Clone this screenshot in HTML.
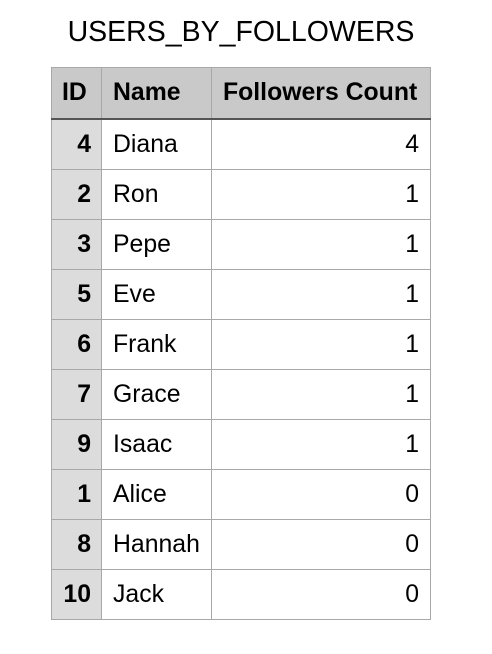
<!DOCTYPE html>
<html><head><style>
body{margin:0;width:492px;height:654px;background:#fff;font-family:"Liberation Sans",Arial,sans-serif;}
.t{position:absolute;top:16px;left:0;width:482px;text-align:center;font-size:28.5px;color:#000;}
table{position:absolute;left:51px;top:67px;border-collapse:collapse;font-size:24.8px;table-layout:fixed;width:379px;}
td,th{border:1px solid #a8a8a8;height:49px;padding:0 11px;white-space:nowrap;overflow:visible;}
th{background:#c9c9c9;font-weight:bold;text-align:left;height:50px;border-bottom:2px solid #555;}
td.id{background:#dcdcdc;font-weight:bold;text-align:right;padding:0 10px 0 0;}
th.id{padding:0 0 0 10px;}
.c{text-align:right;}
th.c{text-align:left;}
</style></head><body>
<div class="t">USERS_BY_FOLLOWERS</div>
<table>
<colgroup><col style="width:50px"><col style="width:110px"><col style="width:219px"></colgroup>
<tr><th class="id">ID</th><th>Name</th><th class="c">Followers Count</th></tr>
<tr><td class="id">4</td><td>Diana</td><td class="c">4</td></tr>
<tr><td class="id">2</td><td>Ron</td><td class="c">1</td></tr>
<tr><td class="id">3</td><td>Pepe</td><td class="c">1</td></tr>
<tr><td class="id">5</td><td>Eve</td><td class="c">1</td></tr>
<tr><td class="id">6</td><td>Frank</td><td class="c">1</td></tr>
<tr><td class="id">7</td><td>Grace</td><td class="c">1</td></tr>
<tr><td class="id">9</td><td>Isaac</td><td class="c">1</td></tr>
<tr><td class="id">1</td><td>Alice</td><td class="c">0</td></tr>
<tr><td class="id">8</td><td>Hannah</td><td class="c">0</td></tr>
<tr><td class="id">10</td><td>Jack</td><td class="c">0</td></tr>
</table>
</body></html>
